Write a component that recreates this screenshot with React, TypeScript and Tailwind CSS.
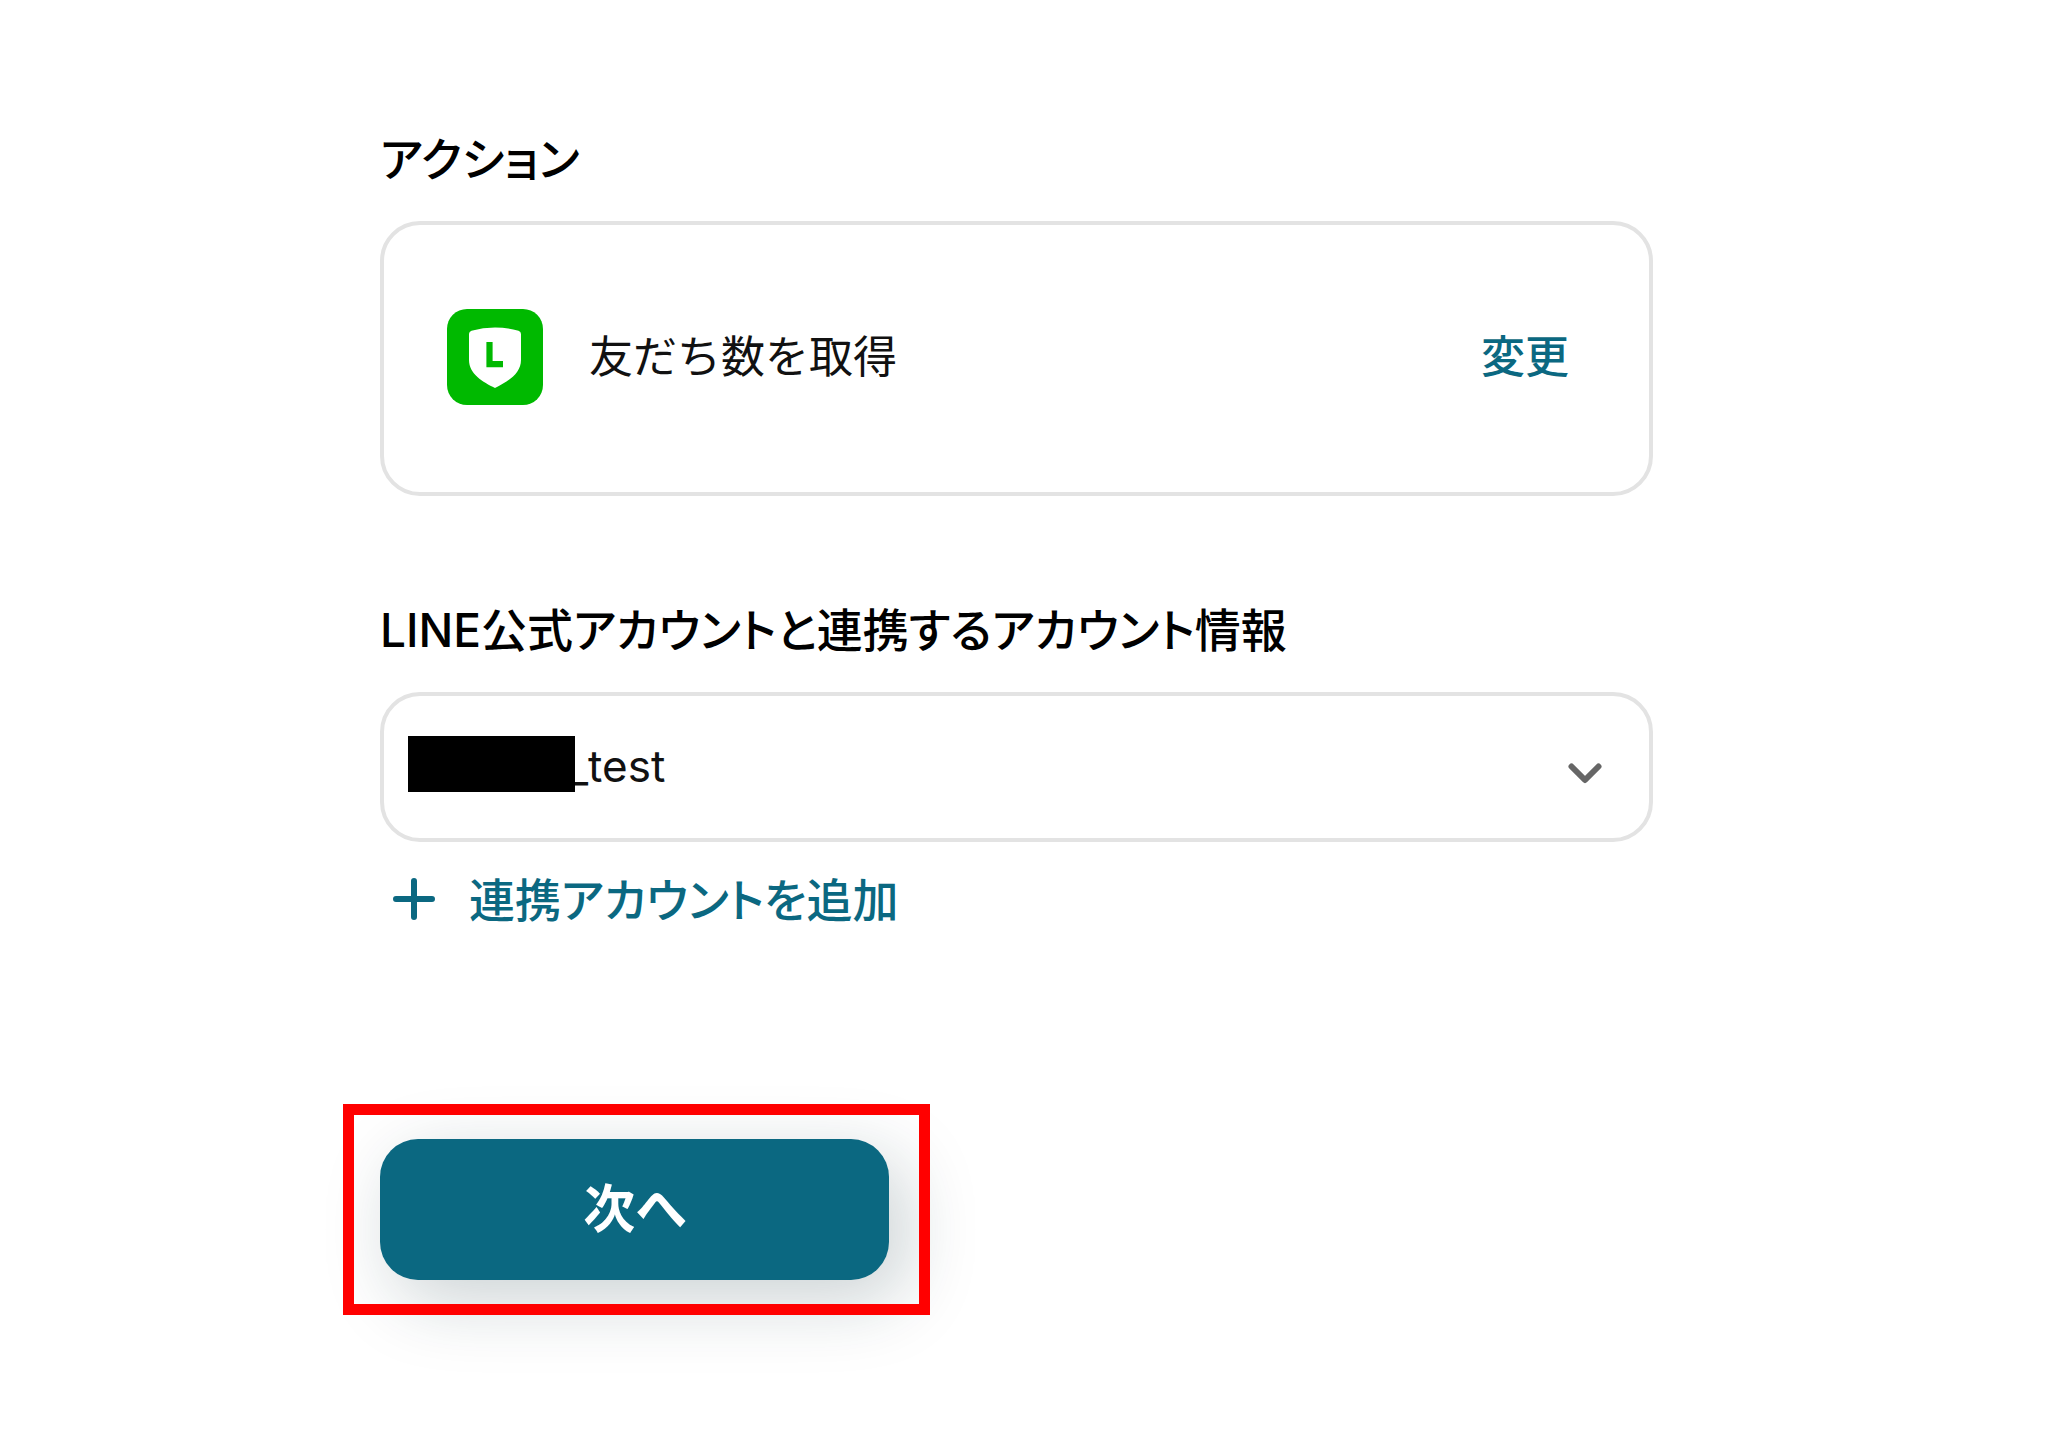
import { useState } from "react";

function AccountLogo() {
  return (
    <svg viewBox="0 0 96 96" className="size-24 shrink-0" aria-hidden="true">
      <rect width="96" height="96" rx="20" fill="#00b900" />
      <path
        d="M22 25Q22 22.500 24.500 21.800Q36 18.500 48 18.500Q60 18.500 71.500 21.800Q74 22.500 74 25V51C74 65 60 73 48 79C36 73 22 65 22 51Z"
        fill="#fff"
      />
      <path d="M42.500 33V55.200H56" fill="none" stroke="#00b900" strokeWidth="6.200" />
    </svg>
  );
}

export default function App() {
  const [account, setAccount] = useState("test");

  return (
    <main className="pt-[127px] pr-[395px] pb-[130px] pl-[380px] font-['Inter','Noto_Sans_CJK_JP',sans-serif] text-[44px] leading-[64px] text-[#111]">
      <section>
        <h2 className="text-[46px] font-medium text-black [font-feature-settings:'palt']">
          アクション
        </h2>
        <div className="mt-[30px] flex h-[275px] items-center rounded-[40px] border-4 border-[#e3e3e3] pr-20 pb-[3px] pl-[63px]">
          <AccountLogo />
          <p className="ml-[46px] flex-1">友だち数を取得</p>
          <button type="button" className="font-medium text-[#0b6881]">
            変更
          </button>
        </div>
      </section>

      <section className="mt-[102px]">
        <label
          htmlFor="account"
          className="block text-[46px] font-medium text-black [font-feature-settings:'palt']"
        >
          LINE公式アカウントと連携するアカウント情報
        </label>
        <div className="relative mt-[30px]">
          <select
            id="account"
            value={account}
            onChange={(event) => setAccount(event.target.value)}
            className="block h-[150px] w-full appearance-none rounded-[40px] border-4 border-[#e3e3e3] bg-white pr-24 pb-[2px] pl-[184px]"
          >
            <option value="test">_test</option>
          </select>
          <span className="absolute top-11 left-7 h-14 w-[167px] bg-black" />
          <svg
            viewBox="0 0 34 22"
            className="pointer-events-none absolute top-[71px] right-[51px] h-[22px] w-[34px]"
            fill="none"
            stroke="#666"
            strokeWidth="6"
            strokeLinecap="round"
            strokeLinejoin="round"
            aria-hidden="true"
          >
            <path d="M3.500 3.500L17 17L30.500 3.500" />
          </svg>
        </div>
        <button
          type="button"
          className="mt-[26px] flex items-center pl-[13px] text-[46px] font-medium text-[#0b6881] [font-feature-settings:'palt']"
        >
          <svg
            viewBox="0 0 42 42"
            className="mr-[34px] mb-[2px] size-[42px]"
            stroke="currentColor"
            strokeWidth="6"
            strokeLinecap="round"
            aria-hidden="true"
          >
            <path d="M21 3V39M3 21H39" />
          </svg>
          連携アカウントを追加
        </button>
      </section>

      <div className="relative mt-[207px] w-[509px]">
        <button
          type="button"
          className="block h-[141px] w-full rounded-[38px] bg-[#0b6881] text-[52px] font-bold text-white shadow-[16px_20px_72px_rgba(20,50,60,0.22)] [font-feature-settings:'palt']"
        >
          次へ
        </button>
        <span className="pointer-events-none absolute -top-[35px] -right-[41px] -bottom-[35px] -left-[37px] border-11 border-[#f00]" />
      </div>
    </main>
  );
}
